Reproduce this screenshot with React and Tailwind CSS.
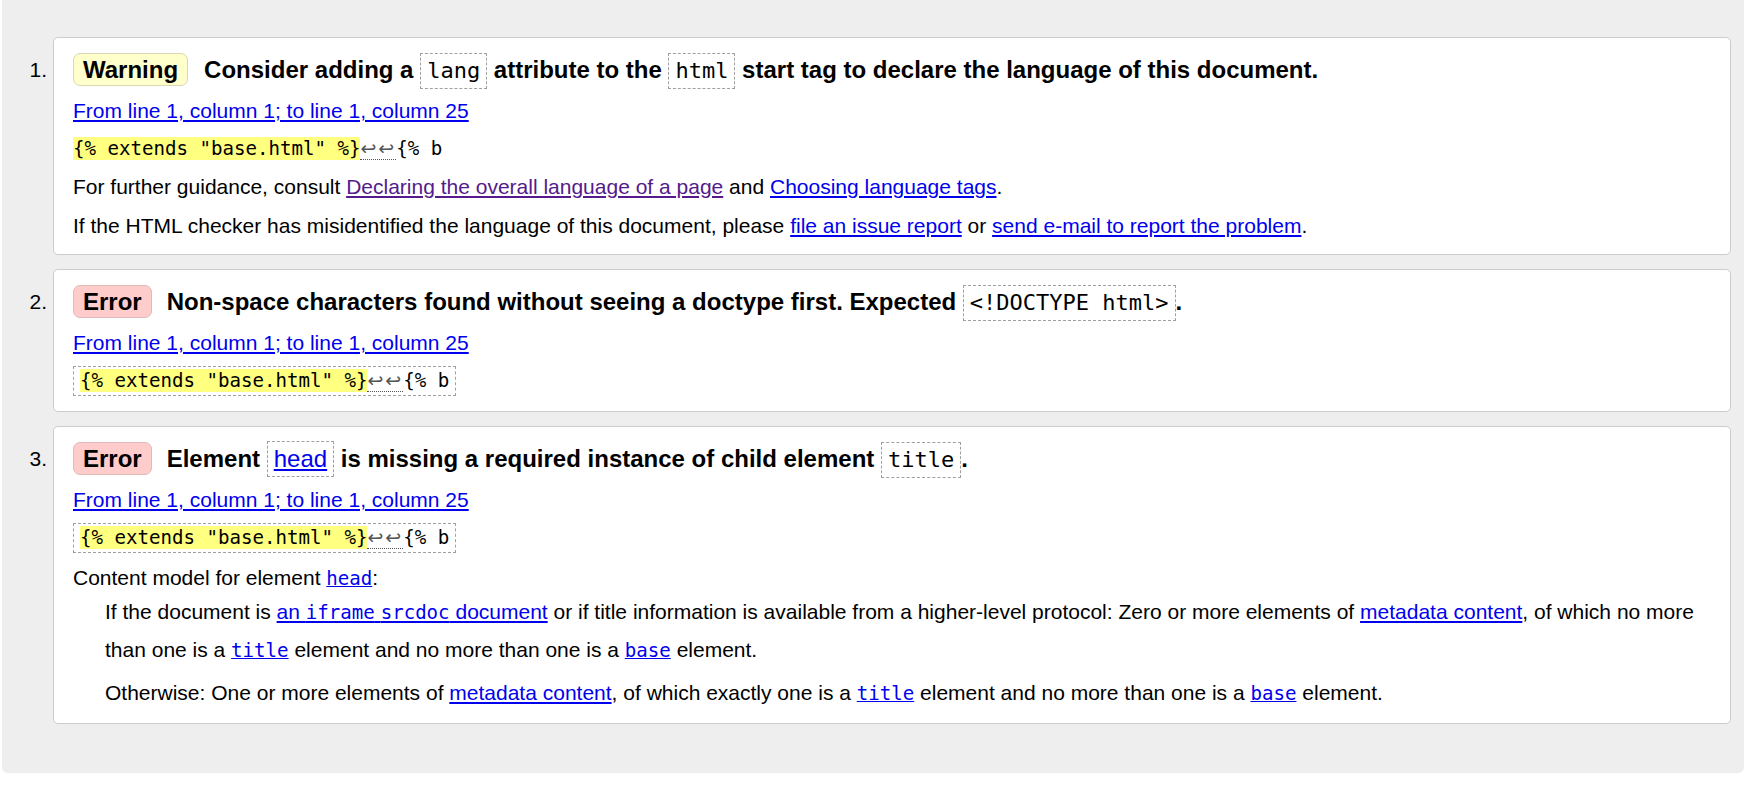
import React from "react";

function Num({ n }) {
  return (
    <div className="w-[51px] shrink-0 pr-[6px] pt-[20px] text-right text-[21px] leading-[26px] text-black">
      {n}.
    </div>
  );
}

function Badge({ kind }) {
  if (kind === "warning") {
    return (
      <span className="mr-[16px] inline-block rounded-[7px] border border-[#d8d6b4] bg-[#ffffcc] px-[9px] text-[24px] font-bold leading-[31px]">
        Warning
      </span>
    );
  }
  return (
    <span className="mr-[15px] inline-block rounded-[7px] border border-[#e2b9b9] bg-[#ffcccc] px-[9px] text-[24px] font-bold leading-[31px]">
      Error
    </span>
  );
}

function TBox({ children }) {
  return (
    <span className="inline-block border border-dashed border-[#a0a0a0] px-[6px] font-['DejaVu_Sans_Mono',monospace] text-[22px] font-normal leading-[34px]">
      {children}
    </span>
  );
}

function Loc() {
  return (
    <p className="mt-[10px] h-[26px] text-[21px] leading-[26px]">
      <a href="#" className="text-[#0000ee] underline">
        From line 1, column 1; to line 1, column 25
      </a>
    </p>
  );
}

function ExtractInner() {
  return (
    <>
      <span className="bg-[#ffff80] font-['DejaVu_Sans_Mono',monospace] text-[19.1px] leading-[22px]">
        {'{% extends "base.html" %}'}
      </span>
      <span className="border-b border-dotted border-[#555] font-['DejaVu_Sans',sans-serif] text-[19px] leading-[20px] tracking-[2px] text-[#555]">
        ↩↩
      </span>
      <span className="font-['DejaVu_Sans_Mono',monospace] text-[19.1px] leading-[20px]">{"{% b"}</span>
    </>
  );
}

function Card({ children, pb = "pb-[15px]" }) {
  return (
    <div className={"flex-1 rounded-[5px] border border-[#cccccc] bg-white pl-[19px] pr-[19px] pt-[14px] " + pb}>
      {children}
    </div>
  );
}

const link = "text-[#0000ee] underline";
const mono = "font-['DejaVu_Sans_Mono',monospace] text-[19.1px] leading-[20px]";

export default function App() {
  return (
    <div className="min-h-screen bg-white font-['Liberation_Sans',Arial,sans-serif] text-black">
      <div className="ml-[2px] rounded-b-[6px] bg-[#eeeeee] pb-[49px] pr-[13px] pt-[37px]">
        <div className="flex flex-col gap-[14px]">
          {/* 1 */}
          <div className="flex items-start">
            <Num n={1} />
            <Card>
              <p className="h-[36px] text-[24px] font-bold leading-[36px]">
                <Badge kind="warning" />
                Consider adding a <TBox>lang</TBox> attribute to the <TBox>html</TBox> start tag to declare the
                language of this document.
              </p>
              <Loc />
              <p className="mt-[11px] h-[26px] whitespace-nowrap pt-[2px] leading-[26px]">
                <ExtractInner />
              </p>
              <p className="mt-[13px] h-[26px] text-[21px] leading-[26px]">
                For further guidance, consult{" "}
                <a href="#" className="text-[#551a8b] underline">
                  Declaring the overall language of a page
                </a>{" "}
                and{" "}
                <a href="#" className={link}>
                  Choosing language tags
                </a>
                .
              </p>
              <p className="mt-[13px] h-[26px] text-[21px] leading-[26px]">
                If the HTML checker has misidentified the language of this document, please{" "}
                <a href="#" className={link}>
                  file an issue report
                </a>{" "}
                or{" "}
                <a href="#" className={link}>
                  send e-mail to report the problem
                </a>
                .
              </p>
            </Card>
          </div>

          {/* 2 */}
          <div className="flex items-start">
            <Num n={2} />
            <Card>
              <p className="h-[36px] text-[24px] font-bold leading-[36px]">
                <Badge kind="error" />
                Non-space characters found without seeing a doctype first. Expected <TBox>{"<!DOCTYPE html>"}</TBox>.
              </p>
              <Loc />
              <div className="mt-[10px] h-[30px]">
                <span className="inline-block h-[30px] whitespace-nowrap border border-dashed border-[#a0a0a0] px-[6px] pt-[2px] leading-[26px]">
                  <ExtractInner />
                </span>
              </div>
            </Card>
          </div>

          {/* 3 */}
          <div className="flex items-start">
            <Num n={3} />
            <Card pb="pb-[11px]">
              <p className="h-[36px] text-[24px] font-bold leading-[36px]">
                <Badge kind="error" />
                Element{" "}
                <span className="inline-block border border-dashed border-[#a0a0a0] px-[6px] font-normal leading-[34px]">
                  <a href="#" className={link}>
                    head
                  </a>
                </span>{" "}
                is missing a required instance of child element <TBox>title</TBox>.
              </p>
              <Loc />
              <div className="mt-[10px] h-[30px]">
                <span className="inline-block h-[30px] whitespace-nowrap border border-dashed border-[#a0a0a0] px-[6px] pt-[2px] leading-[26px]">
                  <ExtractInner />
                </span>
              </div>
              <p className="mt-[12px] h-[26px] text-[21px] leading-[26px]">
                Content model for element{" "}
                <a href="#" className={link + " " + mono}>
                  head
                </a>
                :
              </p>
              <div className="pl-[32px] text-[21px]">
                <p className="mt-[2px] leading-[38px]">
                  If the document is{" "}
                  <a href="#" className={link}>
                    an <code className={mono}>iframe</code> <code className={mono}>srcdoc</code> document
                  </a>{" "}
                  or if title information is available from a higher-level protocol: Zero or more elements of{" "}
                  <a href="#" className={link}>
                    metadata content
                  </a>
                  , of which no more than one is a{" "}
                  <a href="#" className={link + " " + mono}>
                    title
                  </a>{" "}
                  element and no more than one is a{" "}
                  <a href="#" className={link + " " + mono}>
                    base
                  </a>{" "}
                  element.
                </p>
                <p className="mt-[5px] leading-[38px]">
                  Otherwise: One or more elements of{" "}
                  <a href="#" className={link}>
                    metadata content
                  </a>
                  , of which exactly one is a{" "}
                  <a href="#" className={link + " " + mono}>
                    title
                  </a>{" "}
                  element and no more than one is a{" "}
                  <a href="#" className={link + " " + mono}>
                    base
                  </a>{" "}
                  element.
                </p>
              </div>
            </Card>
          </div>
        </div>
      </div>
    </div>
  );
}
